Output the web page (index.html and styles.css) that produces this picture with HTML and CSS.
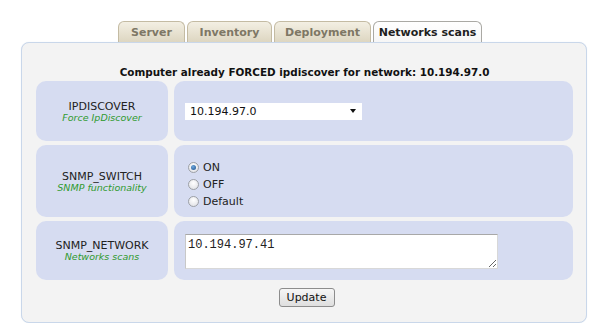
FILE: index.html
```html
<!DOCTYPE html>
<html>
<head>
<meta charset="utf-8">
<link rel="stylesheet" href="styles.css">
</head>
<body>
<div class="page">
  <ul class="tabs">
    <li class="tab t-server">Server</li>
    <li class="tab t-inv">Inventory</li>
    <li class="tab t-dep">Deployment</li>
    <li class="tab t-net active">Networks scans</li>
  </ul>
  <div class="panel">
    <div class="title">Computer already FORCED ipdiscover for network: 10.194.97.0</div>
    <div class="rows">
      <div class="row r1">
        <div class="label">
          <div class="name">IPDISCOVER</div>
          <div class="desc">Force IpDiscover</div>
        </div>
        <div class="field">
          <div class="select"><span>10.194.97.0</span><span class="arrow"></span></div>
        </div>
      </div>
      <div class="row r2">
        <div class="label">
          <div class="name">SNMP_SWITCH</div>
          <div class="desc">SNMP functionality</div>
        </div>
        <div class="field">
          <div class="radios">
            <div class="radio"><span class="dot on"></span>ON</div>
            <div class="radio"><span class="dot"></span>OFF</div>
            <div class="radio"><span class="dot"></span>Default</div>
          </div>
        </div>
      </div>
      <div class="row r3">
        <div class="label">
          <div class="name">SNMP_NETWORK</div>
          <div class="desc">Networks scans</div>
        </div>
        <div class="field">
          <textarea class="area">10.194.97.41</textarea>
        </div>
      </div>
    </div>
    <div class="actions"><button class="btn">Update</button></div>
  </div>
</div>
</body>
</html>
```
FILE: styles.css
```css
html, body {
  margin: 0;
  padding: 0;
  background: #ffffff;
}
body {
  font-family: "DejaVu Sans", Verdana, sans-serif;
  font-size: 11px;
  color: #222;
}
.page {
  padding: 21px 0 0 21px;
  width: 566px;
}
.tabs {
  list-style: none;
  margin: 0 0 0 97px;
  padding: 0;
  display: flex;
  height: 21px;
  align-items: flex-end;
}
.tab {
  box-sizing: border-box;
  height: 21px;
  margin-right: 2px;
  border: 1px solid #c4bba3;
  border-bottom: none;
  border-radius: 6px 6px 0 0;
  background: linear-gradient(#f3efe3, #ddd6c1);
  color: #7e7765;
  font-weight: bold;
  font-size: 11px;
  text-align: center;
  line-height: 21px;
}
.t-server { width: 67px; }
.t-inv { width: 85px; }
.t-dep { width: 97px; margin-right: 2px; }
.t-net { width: 109px; }
.tab.active {
  background: linear-gradient(#ffffff, #f6f6f6);
  border-color: #aaa9a4;
  color: #1f1f1f;
}
.panel {
  box-sizing: border-box;
  height: 281px;
  border: 1px solid #c9d7ea;
  border-radius: 8px;
  background: #f3f3f3;
  padding: 21px 13px 0 14px;
  box-shadow: 0 0 1px #dbe4f0;
}
.title {
  font-weight: bold;
  font-size: 10.4px;
  text-align: center;
  line-height: 16px;
  height: 16px;
  color: #111;
}
.rows {
  margin-top: 1px;
  display: flex;
  flex-direction: column;
  gap: 4px;
}
.row {
  display: grid;
  grid-template-columns: 132px 399px;
  column-gap: 6px;
}
.r1 { height: 60px; }
.r2 { height: 72px; }
.r3 { height: 59px; }
.label, .field {
  background: #d6dcf1;
  border-radius: 10px;
}
.label {
  display: flex;
  flex-direction: column;
  justify-content: center;
  align-items: center;
  text-align: center;
}
.name {
  color: #222;
  font-size: 11px;
  line-height: 11px;
  margin-top: 1px;
}
.desc {
  color: #2f9a2f;
  font-style: italic;
  font-size: 9.5px;
  line-height: 11px;
}
.field {
  display: flex;
  align-items: center;
  padding-left: 11px;
}
.select {
  box-sizing: border-box;
  width: 177px;
  height: 17px;
  background: #fff;
  display: flex;
  align-items: center;
  justify-content: space-between;
  padding: 0 6px 0 5px;
  color: #111;
  font-size: 11px;
}
.arrow {
  width: 0;
  height: 0;
  border-left: 3.5px solid transparent;
  border-right: 3.5px solid transparent;
  border-top: 4px solid #111;
}
.radios {
  display: flex;
  flex-direction: column;
  margin-top: 6px;
  margin-left: 3px;
}
.radio {
  display: flex;
  align-items: center;
  height: 17px;
  color: #222;
  font-size: 11px;
}
.dot {
  box-sizing: border-box;
  width: 11px;
  height: 11px;
  border-radius: 50%;
  border: 1px solid #9da0a6;
  background: radial-gradient(circle at 50% 35%, #ffffff, #dcdde2);
  margin-right: 4px;
  display: flex;
  align-items: center;
  justify-content: center;
}
.dot.on::after {
  content: "";
  width: 5px;
  height: 5px;
  border-radius: 50%;
  background: radial-gradient(circle at 40% 35%, #6fa8dc, #1c4f8c);
}
.area {
  box-sizing: border-box;
  width: 313px;
  height: 35px;
  margin: 1px 0 0 0;
  padding: 3px 2px;
  border: 1px solid #d8d8d8;
  border-top-color: #a8a8a8;
  border-left-color: #c8c8c8;
  background: #fff;
  font-family: "Liberation Mono", "DejaVu Sans Mono", monospace;
  font-size: 12px;
  color: #222;
  resize: both;
  outline: none;
}
.actions {
  display: flex;
  justify-content: center;
  margin-top: 8px;
  padding-left: 4px;
}
.btn {
  box-sizing: border-box;
  width: 56px;
  height: 19px;
  padding: 0;
  font-family: "DejaVu Sans", Verdana, sans-serif;
  font-size: 11px;
  color: #111;
  border: 1px solid #8c8c8c;
  border-radius: 3px;
  background: linear-gradient(#f6f6f6, #dedede);
}
```
